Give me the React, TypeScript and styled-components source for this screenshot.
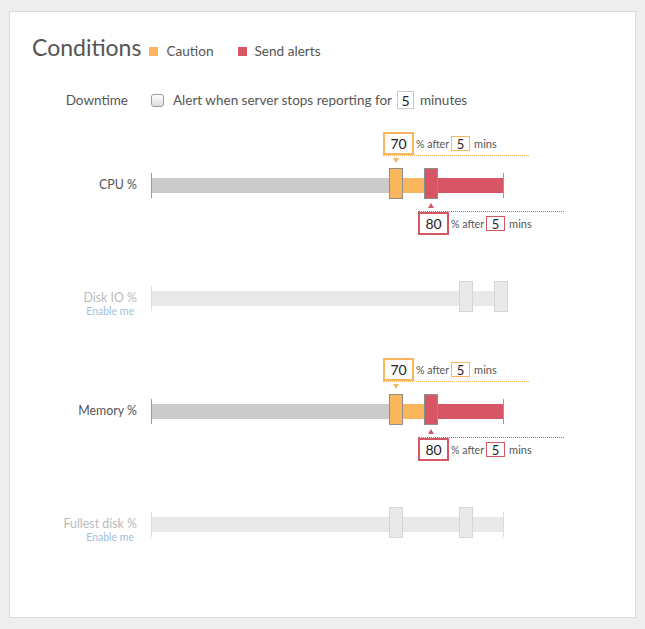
import styled, { createGlobalStyle } from "styled-components";

const GlobalStyle = createGlobalStyle`
  body {
    margin: 0;
    background: #eeeeee;
    font-family: Lato, "Open Sans", sans-serif;
    color: #555;
  }
`;

const ORANGE = "#fbb55d";
const RED = "#d65666";
const SCALE = 3.5;
const HANDLE_W = 14;
const RAIL_W = 351;

type Tone = "caution" | "alert";
const toneColor = (t: Tone) => (t === "caution" ? ORANGE : RED);

type Metric = {
  name: string;
  enabled: boolean;
  caution: number;
  alert: number;
  after?: number;
};

const metrics: Metric[] = [
  { name: "CPU %", enabled: true, caution: 70, alert: 80, after: 5 },
  { name: "Disk IO %", enabled: false, caution: 90, alert: 100 },
  { name: "Memory %", enabled: true, caution: 70, alert: 80, after: 5 },
  { name: "Fullest disk %", enabled: false, caution: 70, alert: 90 },
];

const handleLeft = (v: number) => Math.round(v * SCALE) - HANDLE_W / 2;

const Card = styled.section`
  margin: 11px 0 0 9px;
  width: 627px;
  height: 607px;
  box-sizing: border-box;
  border: 1px solid #dcdcdc;
  background: #fff;
  padding-top: 21px;
`;

const Header = styled.div`
  display: flex;
  align-items: baseline;
  padding-left: 22px;
`;

const Title = styled.h1`
  margin: 0 8px 0 0;
  font-size: 23px;
  font-weight: 400;
  line-height: 28px;
  color: #555;
`;

const LegendItem = styled.span<{ $color: string }>`
  display: inline-flex;
  align-items: baseline;
  gap: 8px;
  font-size: 13.6px;
  color: #555;
  & + & {
    margin-left: 24px;
  }
  &::before {
    content: "";
    width: 9px;
    height: 9px;
    background: ${(p) => p.$color};
  }
`;

const Row = styled.div`
  display: grid;
  grid-template-columns: 127px 1fr;
  column-gap: 14px;
`;

const DowntimeRow = styled(Row)`
  margin-top: 27px;
  height: 24px;
  align-items: center;
  font-size: 13.5px;
`;

const DowntimeLabel = styled.div`
  text-align: right;
  padding-right: 9px;
`;

const CheckLine = styled.label`
  display: flex;
  align-items: center;
`;

const Checkbox = styled.span`
  width: 13px;
  height: 13px;
  box-sizing: border-box;
  border: 1px solid #9a9a9a;
  border-radius: 3px;
  background: linear-gradient(#ffffff, #dcdcdc);
  margin-right: 9px;
`;

const MinutesBox = styled.span`
  display: inline-flex;
  align-items: center;
  justify-content: center;
  width: 17px;
  height: 18px;
  box-sizing: border-box;
  border: 1px solid #cccccc;
  color: #222;
  font-size: 14px;
  margin: 0 6px 0 5px;
`;

const Metrics = styled.div`
  margin-top: 16px;
`;

const MetricRow = styled(Row)`
  height: 113px;
`;

const LabelCell = styled.div`
  display: flex;
  flex-direction: column;
  align-items: flex-end;
  padding-top: 48px;
`;

const Name = styled.span<{ $enabled: boolean }>`
  font-size: 12.4px;
  line-height: 17px;
  color: ${(p) => (p.$enabled ? "#555" : "#bbbbbb")};
`;

const Hint = styled.span`
  font-size: 10.5px;
  line-height: 11px;
  color: #9fc0da;
  padding-right: 3px;
`;

const SliderArea = styled.div`
  position: relative;
  height: 113px;
`;

const Rail = styled.div<{ $enabled: boolean }>`
  margin-top: 45px;
  width: ${RAIL_W}px;
  height: 25px;
  display: flex;
  align-items: center;
  border-left: 1px solid ${(p) => (p.$enabled ? "#999" : "#dddddd")};
  border-right: 1px solid ${(p) => (p.$enabled ? "#999" : "#dddddd")};
`;

const Segment = styled.div<{ $color: string }>`
  height: 15px;
  flex: 0 0 auto;
  background: ${(p) => p.$color};
  &:last-child {
    flex: 1 1 auto;
  }
`;

const Handle = styled.div<{ $color: string; $enabled: boolean }>`
  position: absolute;
  top: 40px;
  width: ${HANDLE_W}px;
  height: 31px;
  box-sizing: border-box;
  border: 1px solid ${(p) => (p.$enabled ? "#8e8e8e" : "#d6d6d6")};
  background: ${(p) => p.$color};
`;

const Bubble = styled.div<{ $tone: Tone }>`
  position: absolute;
  top: ${(p) => (p.$tone === "caution" ? "4px" : "83px")};
  width: 146px;
  height: 23px;
  display: flex;
  align-items: center;
  ${(p) =>
    p.$tone === "caution"
      ? `border-bottom: 1px dotted ${ORANGE};`
      : `border-top: 1px dotted ${RED};`}
  &::after {
    content: "";
    position: absolute;
    left: 10px;
    border-left: 3px solid transparent;
    border-right: 3px solid transparent;
    ${(p) =>
      p.$tone === "caution"
        ? `top: 26px; border-top: 5px solid ${ORANGE};`
        : `top: -9px; border-bottom: 5px solid ${RED};`}
  }
`;

const ValueBox = styled.span<{ $tone: Tone }>`
  display: inline-flex;
  align-items: center;
  justify-content: center;
  width: 31px;
  height: 23px;
  box-sizing: border-box;
  border: 2px solid ${(p) => toneColor(p.$tone)};
  background: #fff;
  color: #222;
  font-size: 14px;
  ${(p) => (p.$tone === "alert" ? "margin-top: -1px;" : "")}
`;

const SmallText = styled.span`
  font-size: 10.6px;
  color: #555;
  margin: 0 2px 0 2px;
`;

const SmallBox = styled.span<{ $tone: Tone }>`
  display: inline-flex;
  align-items: center;
  justify-content: center;
  width: 19px;
  height: 15px;
  box-sizing: border-box;
  border: 1px solid ${(p) => toneColor(p.$tone)};
  color: #222;
  font-size: 13px;
`;

const Mins = styled.span`
  font-size: 11px;
  color: #555;
  margin-left: 4px;
`;

const Threshold = ({ tone, value, after, left }: { tone: Tone; value: number; after: number; left: number }) => (
  <Bubble $tone={tone} style={{ left }}>
    <ValueBox $tone={tone}>{value}</ValueBox>
    <SmallText>% after</SmallText>
    <SmallBox $tone={tone}>{after}</SmallBox>
    <Mins>mins</Mins>
  </Bubble>
);

const Slider = ({ m }: { m: Metric }) => {
  const cLeft = handleLeft(m.caution);
  const aLeft = handleLeft(m.alert);
  const handleBg = m.enabled ? null : "#e9e9e9";
  return (
    <SliderArea>
      <Rail $enabled={m.enabled}>
        {m.enabled ? (
          <>
            <Segment $color="#cbcbcb" style={{ width: cLeft - 1 }} />
            <Segment $color={ORANGE} style={{ width: aLeft - cLeft }} />
            <Segment $color={RED} />
          </>
        ) : (
          <Segment $color="#e9e9e9" />
        )}
      </Rail>
      <Handle $enabled={m.enabled} $color={handleBg ?? ORANGE} style={{ left: cLeft }} />
      <Handle $enabled={m.enabled} $color={handleBg ?? RED} style={{ left: aLeft }} />
      {m.enabled && m.after !== undefined && (
        <>
          <Threshold tone="caution" value={m.caution} after={m.after} left={cLeft - 6} />
          <Threshold tone="alert" value={m.alert} after={m.after} left={aLeft - 6} />
        </>
      )}
    </SliderArea>
  );
};

export default function App() {
  return (
    <>
      <GlobalStyle />
      <Card>
        <Header>
          <Title>Conditions</Title>
          <LegendItem $color={ORANGE}>Caution</LegendItem>
          <LegendItem $color={RED}>Send alerts</LegendItem>
        </Header>
        <DowntimeRow>
          <DowntimeLabel>Downtime</DowntimeLabel>
          <CheckLine>
            <Checkbox />
            Alert when server stops reporting for
            <MinutesBox>5</MinutesBox>
            minutes
          </CheckLine>
        </DowntimeRow>
        <Metrics>
          {metrics.map((m) => (
            <MetricRow key={m.name}>
              <LabelCell>
                <Name $enabled={m.enabled}>{m.name}</Name>
                {!m.enabled && <Hint>Enable me</Hint>}
              </LabelCell>
              <Slider m={m} />
            </MetricRow>
          ))}
        </Metrics>
      </Card>
    </>
  );
}
